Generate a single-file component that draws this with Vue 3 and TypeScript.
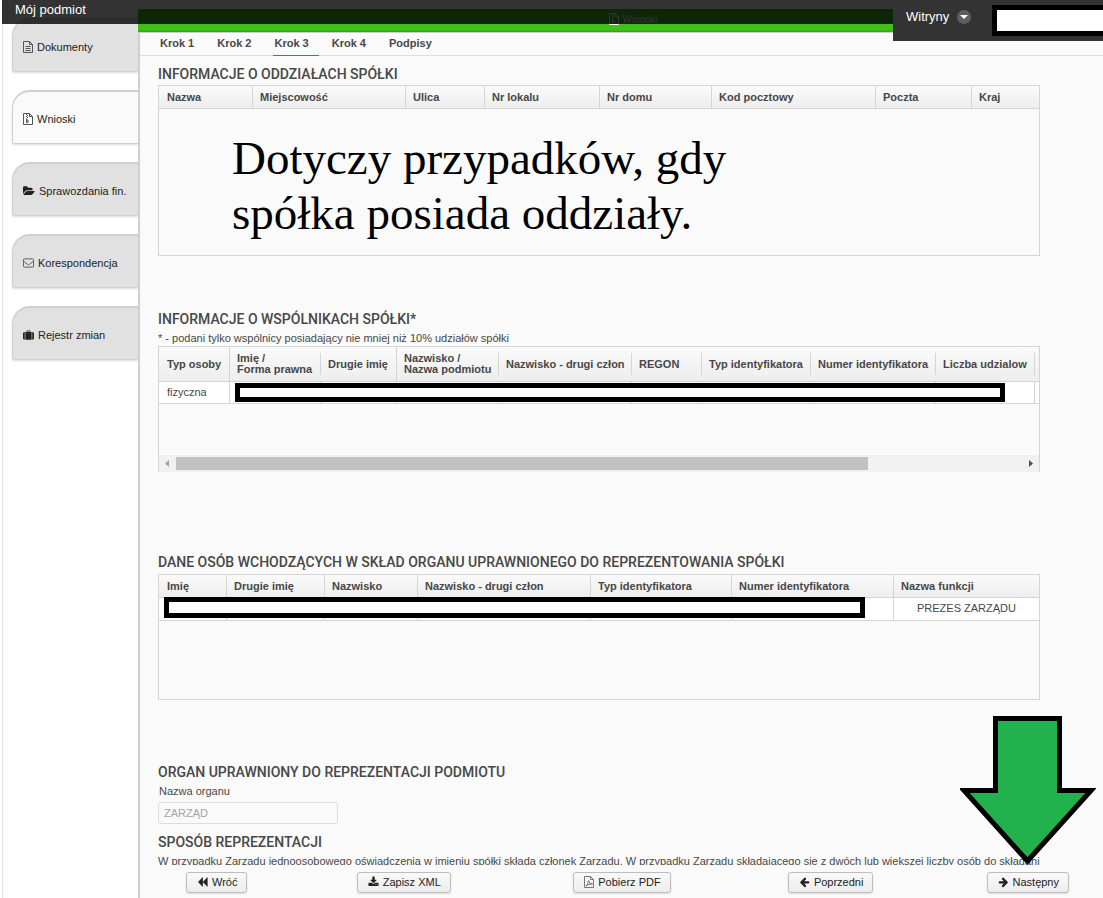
<script setup lang="ts">
import { ref } from 'vue'

type IconName = 'file' | 'zip' | 'folder' | 'mail' | 'case' | 'back' | 'save' | 'pdf' | 'left' | 'right'
interface Column { label: string; width?: number; tall?: boolean }

const solid: Partial<Record<IconName, string>> = {
  folder: 'M1879 952q0 31-31 66l-336 396q-43 51-120.5 86.5t-143.5 35.5h-1088q-34 0-60.5-13t-26.5-43q0-31 31-66l336-396q43-51 120.5-86.5t143.5-35.5h1088q34 0 60.5 13t26.5 43zm-343-344v160h-832q-94 0-197 47.5t-164 119.5l-337 396-5 6q0-4-.5-12.5t-.5-12.5v-960q0-92 66-158t158-66h320q92 0 158 66t66 158v32h544q92 0 158 66t66 158z',
  back: 'M1683 141q19-19 32-13t13 32v1472q0 26-13 32t-32-13l-710-710q-9-9-13-19v710q0 26-13 32t-32-13l-710-710q-19-19-19-45t19-45l710-710q19-19 32-13t13 32v710q4-10 13-19z',
  save: 'M1344 1344q0-26-19-45t-45-19-45 19-19 45 19 45 45 19 45-19 19-45zm256 0q0-26-19-45t-45-19-45 19-19 45 19 45 45 19 45-19 19-45zm128-224v320q0 40-28 68t-68 28h-1472q-40 0-68-28t-28-68v-320q0-40 28-68t68-28h465l135 136q58 56 136 56t136-56l136-136h464q40 0 68 28t28 68zm-325-569q17 41-14 70l-448 448q-18 19-45 19t-45-19l-448-448q-31-29-14-70 17-39 59-39h256v-448q0-26 19-45t45-19h256q26 0 45 19t19 45v448h256q42 0 59 39z',
  left: 'M1664 896v128q0 53-32.5 90.5t-84.5 37.5h-704l293 294q38 36 38 90t-38 90l-75 76q-37 37-90 37-52 0-91-37l-651-652q-37-37-37-90 0-52 37-91l651-650q38-38 91-38 52 0 90 38l75 74q38 38 38 91t-38 91l-293 293h704q52 0 84.5 37.5t32.5 90.5z',
  right: 'M1600 960q0 54-37 91l-651 651q-39 37-91 37-51 0-90-37l-75-75q-38-38-38-91t38-91l293-293h-704q-52 0-84.5-37.5t-32.5-90.5v-128q0-53 32.5-90.5t84.5-37.5h704l-293-294q-38-36-38-90t38-90l75-75q38-38 90-38 53 0 91 38l651 651q37 35 37 90z',
  case: 'M0 640q0-96 64-160t160-64h64v1248h-64q-96 0-160-64t-64-160zM384 1664v-1248h192v-160q0-40 28-68t68-28h448q40 0 68 28t28 68v160h192v1248zM704 416h384v-128h-384zM1504 1664v-1248h64q96 0 160 64t64 160v800q0 96-64 160t-160 64z',
}
const outline: Partial<Record<IconName, string>> = {
  file: 'M1.5 .5h6l3 3v8h-9zM7.5 .5v3h3M3.5 5.5h5M3.5 7.5h5M3.5 9.5h5',
  zip: 'M1.5 .5h6l3 3v8h-9zM7.5 .5v3h3M4.5 1v1M5.5 2v1M4.5 3v1M5.5 4v1M4.5 5.500v4h1.5v-2.500h-1.5',
  pdf: 'M1.5 .5h6l3 3v8h-9zM7.5 .5v3h3M3 10q2-1.500 2.500-5.500q1 4 4 3.500q-4-.5-6.500 2',
  mail: 'M.5 2.500q0-1 1-1h9q1 0 1 1v7q0 1-1 1h-9q-1 0-1-1zM.5 4l4.500 3.500q1 .6 2 0l4.500-3.500',
}
const viewBoxes: Partial<Record<IconName, string>> = {
  folder: '0 0 1920 1792',
  file: '1 0 10 12',
  zip: '1 0 10 12',
  pdf: '1 0 10 12',
  mail: '0 0 12 12',
}
const viewBox = (name: IconName) => viewBoxes[name] ?? '0 0 1792 1792'

const menu: { label: string; icon: IconName }[] = [
  { label: 'Dokumenty', icon: 'file' },
  { label: 'Wnioski', icon: 'zip' },
  { label: 'Sprawozdania fin.', icon: 'folder' },
  { label: 'Korespondencja', icon: 'mail' },
  { label: 'Rejestr zmian', icon: 'case' },
]
const activeMenu = ref('Wnioski')

const steps = ['Krok 1', 'Krok 2', 'Krok 3', 'Krok 4', 'Podpisy']
const activeStep = ref('Krok 3')

const branchCols: Column[] = [
  { label: 'Nazwa', width: 94 },
  { label: 'Miejscowość', width: 153 },
  { label: 'Ulica', width: 79 },
  { label: 'Nr lokalu', width: 115 },
  { label: 'Nr domu', width: 112 },
  { label: 'Kod pocztowy', width: 164 },
  { label: 'Poczta', width: 96 },
  { label: 'Kraj' },
]
const partnerCols: Column[] = [
  { label: 'Typ osoby', width: 71, tall: true },
  { label: 'Imię /\nForma prawna', width: 91 },
  { label: 'Drugie imię', width: 76, tall: true },
  { label: 'Nazwisko /\nNazwa podmiotu', width: 102 },
  { label: 'Nazwisko - drugi człon', width: 133 },
  { label: 'REGON', width: 70 },
  { label: 'Typ identyfikatora', width: 109 },
  { label: 'Numer identyfikatora', width: 125 },
  { label: 'Liczba udzialow', width: 99 },
  { label: '' },
]
const boardCols: Column[] = [
  { label: 'Imię', width: 68 },
  { label: 'Drugie imię', width: 98 },
  { label: 'Nazwisko', width: 93 },
  { label: 'Nazwisko - drugi człon', width: 173 },
  { label: 'Typ identyfikatora', width: 141 },
  { label: 'Numer identyfikatora', width: 162 },
  { label: 'Nazwa funkcji' },
]

const actions: { label: string; icon: IconName }[] = [
  { label: 'Wróć', icon: 'back' },
  { label: 'Zapisz XML', icon: 'save' },
  { label: 'Pobierz PDF', icon: 'pdf' },
  { label: 'Poprzedni', icon: 'left' },
  { label: 'Następny', icon: 'right' },
]
const organ = ref('ZARZĄD')
const colWidth = (c: Column) => (c.width ? { width: c.width + 'px' } : {})
</script>

<template>
  <div class="page">
    <header class="topbar">
      <span class="brand">Mój podmiot</span>
      <div class="account">
        <button type="button" class="sites">
          Witryny
          <svg class="caret" viewBox="0 0 14 14" aria-hidden="true"><circle cx="7" cy="7" r="7" fill="#5f5f5f" /><path d="M3 5h8l-4 4z" fill="#fff" /></svg>
        </button>
        <span class="user"></span>
      </div>
    </header>

    <nav class="sidebar">
      <button v-for="m in menu" :key="m.label" type="button" class="side" :class="{ active: m.label === activeMenu }" @click="activeMenu = m.label">
        <svg class="icon" :class="m.icon" :viewBox="viewBox(m.icon)" aria-hidden="true">
          <path v-if="solid[m.icon]" :d="solid[m.icon]" fill="currentColor" fill-rule="evenodd" />
          <path v-else :d="outline[m.icon]" fill="none" stroke="#555" />
        </svg>
        <span>{{ m.label }}</span>
      </button>
    </nav>

    <main class="panel">
      <div class="caption">
        <svg class="icon zip" :viewBox="viewBox('zip')" aria-hidden="true"><path :d="outline.zip" fill="none" stroke="#fff" /></svg>
        <span>Wnioski</span>
      </div>
      <div class="steps" role="tablist">
        <button v-for="s in steps" :key="s" type="button" role="tab" :aria-selected="s === activeStep" :class="{ active: s === activeStep }" @click="activeStep = s">{{ s }}</button>
      </div>

      <div class="content">
        <section>
          <h2>INFORMACJE O ODDZIAŁACH SPÓŁKI</h2>
          <div class="box box-branches">
            <table>
              <colgroup><col v-for="c in branchCols" :key="c.label" :style="colWidth(c)" /></colgroup>
              <thead><tr><th v-for="c in branchCols" :key="c.label">{{ c.label }}</th></tr></thead>
            </table>
            <p class="remark">Dotyczy przypadków, gdy<br />spółka posiada oddziały.</p>
          </div>
        </section>

        <section class="partners">
          <h2>INFORMACJE O WSPÓLNIKACH SPÓŁKI*</h2>
          <p class="note">* - podani tylko wspólnicy posiadający nie mniej niż 10% udziałów spółki</p>
          <div class="box box-partners">
            <table class="double">
              <colgroup><col v-for="c in partnerCols" :key="c.label" :style="colWidth(c)" /></colgroup>
              <thead><tr><th v-for="c in partnerCols" :key="c.label" :class="{ short: !c.tall }">{{ c.label }}</th></tr></thead>
              <tbody><tr><td v-for="(c, i) in partnerCols" :key="c.label">{{ i === 0 ? 'fizyczna' : '' }}</td></tr></tbody>
            </table>
            <span class="mask mask-partner"></span>
            <div class="scroll" aria-hidden="true">
              <svg viewBox="0 0 17 17"><path d="M10 5v7l-4-3.500z" fill="#a3a3a3" /></svg>
              <div class="track"><div class="thumb"></div><div class="rest"></div></div>
              <svg viewBox="0 0 17 17"><path d="M7 5v7l4-3.500z" fill="#505050" /></svg>
            </div>
          </div>
        </section>

        <section class="board">
          <h2>DANE OSÓB WCHODZĄCYCH W SKŁAD ORGANU UPRAWNIONEGO DO REPREZENTOWANIA SPÓŁKI</h2>
          <div class="box box-board">
            <table>
              <colgroup><col v-for="c in boardCols" :key="c.label" :style="colWidth(c)" /></colgroup>
              <thead><tr><th v-for="c in boardCols" :key="c.label">{{ c.label }}</th></tr></thead>
              <tbody><tr><td v-for="(c, i) in boardCols" :key="c.label" :class="{ role: i === 6 }">{{ i === 6 ? 'PREZES ZARZĄDU' : '' }}</td></tr></tbody>
            </table>
            <span class="mask mask-board"></span>
          </div>
        </section>

        <section class="organ">
          <h2>ORGAN UPRAWNIONY DO REPREZENTACJI PODMIOTU</h2>
          <label for="organ">Nazwa organu</label>
          <input id="organ" v-model="organ" type="text" readonly />
        </section>

        <section class="manner">
          <h2>SPOSÓB REPREZENTACJI</h2>
          <p class="rule">W przypadku Zarządu jednoosobowego oświadczenia w imieniu spółki składa członek Zarządu. W przypadku Zarządu składającego się z dwóch lub większej liczby osób do składania</p>
        </section>
      </div>

      <footer class="actions">
        <button v-for="a in actions" :key="a.label" type="button">
          <svg class="icon" :class="a.icon" :viewBox="viewBox(a.icon)" aria-hidden="true">
            <path v-if="solid[a.icon]" :d="solid[a.icon]" fill="currentColor" fill-rule="evenodd" />
            <path v-else :d="outline[a.icon]" fill="none" stroke="#777" />
          </svg>
          <span>{{ a.label }}</span>
        </button>
        <svg class="pointer" viewBox="0 0 136 150" aria-hidden="true"><path d="M35.500 3.500H99.500V75.500H131L67.500 146L4 75.500H35.500Z" fill="#22b14c" stroke="#000" stroke-width="5" /></svg>
      </footer>
    </main>
  </div>
</template>

<style>
body { background: #fff; }
</style>

<style scoped>
.page, .page * { box-sizing: border-box; }
.page {
  position: relative;
  display: flex;
  min-height: 100vh;
  overflow: hidden;
  font: 11px/14px "Liberation Sans", Arial, sans-serif;
  color: #474747;
}
h2, p { margin: 0; }
button, input { font: inherit; color: inherit; margin: 0; }
button { cursor: pointer; }
.icon { width: 11px; height: 12px; flex: none; }
.icon.file, .icon.zip, .icon.pdf { width: 10px; }
.icon.folder { width: 12px; }

.topbar {
  position: absolute;
  z-index: 2;
  top: 0;
  left: 2px;
  right: 0;
  height: 24px;
  background: rgba(0, 0, 0, .8);
}
.brand {
  display: block;
  padding: 2px 13px;
  font-size: 13px;
  line-height: 16px;
  color: #fff;
}
.account {
  position: absolute;
  top: 0;
  right: 0;
  display: flex;
  width: 210px;
  height: 41px;
  padding: 5px 0 5px 13px;
  background: #333;
}
.sites {
  display: flex;
  align-items: center;
  gap: 8px;
  width: 86px;
  height: 24px;
  padding: 0;
  border: 0;
  background: none;
  font-size: 13px;
  color: #fff;
}
.caret { width: 14px; height: 14px; }
.user { flex: 1; border: 5px solid #000; border-right: 0; background: #fff; }

.sidebar {
  display: flex;
  flex-direction: column;
  gap: 18px;
  width: 136px;
  flex: none;
  margin-left: 2px;
  padding: 18px 0 0 9px;
  border-left: 1px solid #e4e4e4;
}
.side {
  display: flex;
  align-items: center;
  gap: 4px;
  height: 54px;
  padding: 2px 0 0 10px;
  border: 1px solid #d0d0d0;
  border-width: 2px 0 1px 1px;
  border-radius: 18px 0 0 2px;
  background: #e1e1e1;
  box-shadow: 0 1px 2px rgba(0, 0, 0, .15);
  color: #222;
  white-space: nowrap;
}
.side.active { background: #fafafa; }

.panel {
  display: flex;
  flex-direction: column;
  flex: 1;
  min-width: 0;
  margin-top: 9px;
  border-left: 2px solid #d0d0d0;
  background: #fafafa;
}
.caption {
  display: flex;
  justify-content: center;
  gap: 3px;
  height: 24px;
  margin-left: -2px;
  padding: 4px 0 0 26px;
  border-radius: 3px 0 0 0;
  border-bottom: 1px solid #ccc;
  background: linear-gradient(#40bf1a 90%, #32a010);
  font-size: 10px;
  color: #fff;
}
.steps {
  display: flex;
  gap: 11px;
  height: 23px;
  padding-left: 18px;
  border-bottom: 1px solid #ddd;
}
.steps button {
  height: 23px;
  padding: 0 10px 3px 2px;
  border: 0;
  border-bottom: 1px solid transparent;
  background: none;
  font-weight: bold;
}
.steps button.active { border-color: #197de1; }

.content { padding: 10px 63px 0 18px; }
h2 {
  font: 500 14px/16px Roboto, "Liberation Sans", sans-serif;
  white-space: nowrap;
  margin-bottom: 3px;
}
.box {
  position: relative;
  border: 1px solid #d4d4d4;
}
.box-branches { height: 171px; }
.box-partners { height: 126px; border-bottom: 0; }
.box-board { height: 126px; }
table { width: 100%; table-layout: fixed; border-collapse: separate; border-spacing: 0; }
thead tr { height: 23px; background: linear-gradient(#fafafa, #ededed); }
th, td {
  padding: 0 0 0 7px;
  border-right: 1px solid #d4d4d4;
  border-bottom: 1px solid #d4d4d4;
  text-align: left;
  white-space: pre;
}
th:first-child, td:first-child { padding-left: 8px; }
th:last-child, td:last-child { border-right: 0; }
td { height: 23px; padding-bottom: 2px; background: #fff; }
.double td { height: 22px; }
.double thead tr { height: 35px; }
.double th { line-height: 11px; }
.double th.short {
  border-right: 0;
  background: linear-gradient(#d4d4d4, #d4d4d4) right center / 1px 22px no-repeat;
}
.double th.short:last-child { background: none; }
td.role { text-align: center; padding-left: 0; }
.remark {
  padding: 22px 0 0 73px;
  font: 47px/55px "Liberation Serif", "Times New Roman", serif;
  color: #000;
}
.mask { position: absolute; border: 5px solid #000; background: #fff; }
.mask-partner { top: 36px; left: 76px; right: 34px; height: 19px; }
.mask-board { top: 22px; left: 5px; right: 174px; height: 21px; }
.partners { margin-top: 55px; }
.partners h2 { margin-bottom: 4px; }
.note { margin-bottom: 1px; }
.scroll {
  position: absolute;
  left: 0;
  right: 0;
  bottom: 0;
  display: flex;
  height: 17px;
  background: #f1f1f1;
}
.scroll svg { width: 17px; height: 17px; flex: none; }
.track { display: flex; flex: 1; padding: 2px 0; }
.thumb { flex: 9; background: #c1c1c1; }
.rest { flex: 2; }
.board { margin-top: 82px; }
.board h2 { margin-bottom: 4px; }
.organ { display: flex; flex-direction: column; margin-top: 64px; }
.organ label { padding: 1px; margin-bottom: 3px; }
.organ input {
  width: 180px;
  height: 22px;
  padding: 0 5px;
  border: 1px solid #dcdcdc;
  border-radius: 3px;
  background: #fafafa;
  color: #a3a3a3;
  outline: 0;
}
.manner { margin-top: 10px; }
.manner h2 { margin-bottom: 4px; }
.rule { height: 11px; overflow: hidden; white-space: nowrap; }

.actions {
  position: relative;
  display: grid;
  grid-template-columns: 171fr 217fr 215fr 199fr 81fr;
  justify-items: start;
  padding: 7px 34px 5px 46px;
}
.actions button {
  display: flex;
  align-items: center;
  gap: 4px;
  height: 21px;
  padding: 0 9px 1px 10px;
  border: 1px solid #bdbdbd;
  border-radius: 3px;
  background: linear-gradient(#fafafa, #ececec);
  box-shadow: 0 1px 2px rgba(0, 0, 0, .12);
  color: #222;
  white-space: nowrap;
}
.pointer { position: absolute; right: 7px; bottom: 100%; width: 136px; height: 150px; }
</style>
